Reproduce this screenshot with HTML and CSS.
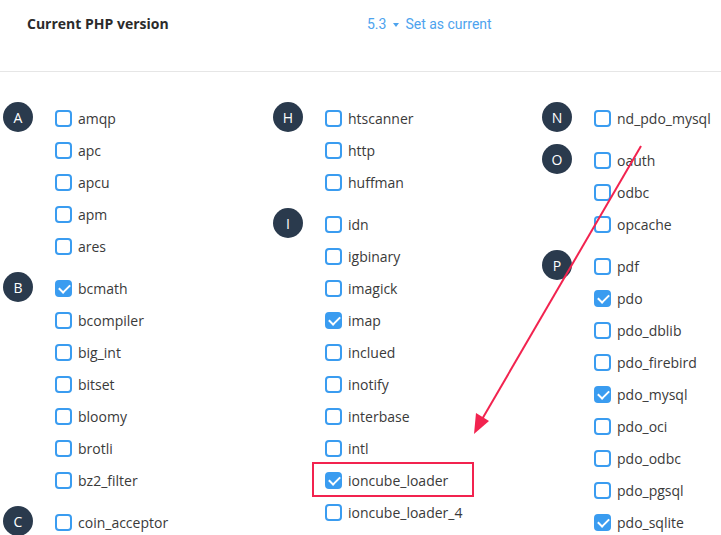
FILE: index.html
```html
<!DOCTYPE html>
<html>
<head>
<meta charset="utf-8">
<link rel="stylesheet" href="styles.css">
</head>
<body>
<div class="page">
  <header class="top">
    <div class="label">Current PHP version</div>
    <div class="version"><span class="ver">5.3</span><span class="caret"></span><span class="set">Set as current</span></div>
  </header>
  <main class="cols">
    <div class="col">
      <section class="group"><div class="letter">A</div><ul class="list">
        <li class="item"><span class="cb"></span>amqp</li>
        <li class="item"><span class="cb"></span>apc</li>
        <li class="item"><span class="cb"></span>apcu</li>
        <li class="item"><span class="cb"></span>apm</li>
        <li class="item"><span class="cb"></span>ares</li>
      </ul></section>
      <section class="group"><div class="letter">B</div><ul class="list">
        <li class="item"><span class="cb on"></span>bcmath</li>
        <li class="item"><span class="cb"></span>bcompiler</li>
        <li class="item"><span class="cb"></span>big_int</li>
        <li class="item"><span class="cb"></span>bitset</li>
        <li class="item"><span class="cb"></span>bloomy</li>
        <li class="item"><span class="cb"></span>brotli</li>
        <li class="item"><span class="cb"></span>bz2_filter</li>
      </ul></section>
      <section class="group"><div class="letter">C</div><ul class="list">
        <li class="item"><span class="cb"></span>coin_acceptor</li>
      </ul></section>
    </div>
    <div class="col">
      <section class="group"><div class="letter">H</div><ul class="list">
        <li class="item"><span class="cb"></span>htscanner</li>
        <li class="item"><span class="cb"></span>http</li>
        <li class="item"><span class="cb"></span>huffman</li>
      </ul></section>
      <section class="group"><div class="letter">I</div><ul class="list">
        <li class="item"><span class="cb"></span>idn</li>
        <li class="item"><span class="cb"></span>igbinary</li>
        <li class="item"><span class="cb"></span>imagick</li>
        <li class="item"><span class="cb on"></span>imap</li>
        <li class="item"><span class="cb"></span>inclued</li>
        <li class="item"><span class="cb"></span>inotify</li>
        <li class="item"><span class="cb"></span>interbase</li>
        <li class="item"><span class="cb"></span>intl</li>
        <li class="item"><span class="cb on"></span>ioncube_loader</li>
        <li class="item"><span class="cb"></span>ioncube_loader_4</li>
      </ul></section>
    </div>
    <div class="col">
      <section class="group"><div class="letter">N</div><ul class="list">
        <li class="item"><span class="cb"></span>nd_pdo_mysql</li>
      </ul></section>
      <section class="group"><div class="letter">O</div><ul class="list">
        <li class="item"><span class="cb"></span>oauth</li>
        <li class="item"><span class="cb"></span>odbc</li>
        <li class="item"><span class="cb"></span>opcache</li>
      </ul></section>
      <section class="group"><div class="letter">P</div><ul class="list">
        <li class="item"><span class="cb"></span>pdf</li>
        <li class="item"><span class="cb on"></span>pdo</li>
        <li class="item"><span class="cb"></span>pdo_dblib</li>
        <li class="item"><span class="cb"></span>pdo_firebird</li>
        <li class="item"><span class="cb on"></span>pdo_mysql</li>
        <li class="item"><span class="cb"></span>pdo_oci</li>
        <li class="item"><span class="cb"></span>pdo_odbc</li>
        <li class="item"><span class="cb"></span>pdo_pgsql</li>
        <li class="item"><span class="cb on"></span>pdo_sqlite</li>
      </ul></section>
    </div>
  </main>
  <svg class="annot" width="721" height="535" viewBox="0 0 721 535">
    <rect x="313" y="463" width="160" height="33" fill="none" stroke="#f2234f" stroke-width="2"/>
    <line x1="641" y1="146" x2="481" y2="421" stroke="#f2234f" stroke-width="2"/>
    <polygon points="474,434 476,413 489,421" fill="#f2234f"/>
  </svg>
</div>
</body>
</html>
```
FILE: styles.css
```css
* { box-sizing: border-box; }
html, body { margin: 0; padding: 0; background: #fff; }
body {
  font-family: "Open Sans", "Liberation Sans", sans-serif;
  color: #333;
  width: 721px;
  height: 535px;
  overflow: hidden;
}
.page { position: relative; width: 721px; height: 535px; }
.top {
  height: 72px;
  border-bottom: 1px solid #e6e6e6;
  display: flex;
  align-items: flex-start;
  padding: 14px 0 0 27px;
}
.label {
  width: 340px;
  font-size: 14px;
  font-weight: 700;
  line-height: 20px;
  color: #2b2b2b;
}
.version {
  display: flex;
  align-items: center;
  font-family: Roboto, "Liberation Sans", sans-serif;
  font-size: 14px;
  line-height: 20px;
  color: #4da3ee;
}
.caret {
  width: 0; height: 0;
  border-left: 3.5px solid transparent;
  border-right: 3.5px solid transparent;
  border-top: 4px solid #4da3ee;
  margin: 1px 6px 0 7px;
}
.cols {
  display: grid;
  grid-template-columns: 270px 269px 180px;
  padding: 30px 0 0 3px;
}
.group { display: flex; margin-bottom: 10px; }
.letter {
  flex: 0 0 30px;
  width: 30px; height: 30px;
  border-radius: 50%;
  background: #2a3a4d;
  color: #fff;
  font-size: 14px;
  display: flex;
  align-items: center;
  justify-content: center;
}
.list { list-style: none; margin: 0 0 0 22px; padding: 0; }
.item {
  height: 32px;
  display: flex;
  align-items: center;
  font-size: 14px;
  color: #3a3a3a;
}
.cb {
  width: 17px; height: 17px;
  border: 2px solid #3a9cf0;
  border-radius: 4px;
  margin: 1px 6px 0 0;
  position: relative;
}
.cb.on { background: #3a9cf0; }
.cb.on::after {
  content: "";
  position: absolute;
  left: 4px; top: 0px;
  width: 5px; height: 9px;
  border: solid #fff;
  border-width: 0 2px 2px 0;
  transform: rotate(45deg);
}
.annot { position: absolute; left: 0; top: 0; pointer-events: none; }
```
